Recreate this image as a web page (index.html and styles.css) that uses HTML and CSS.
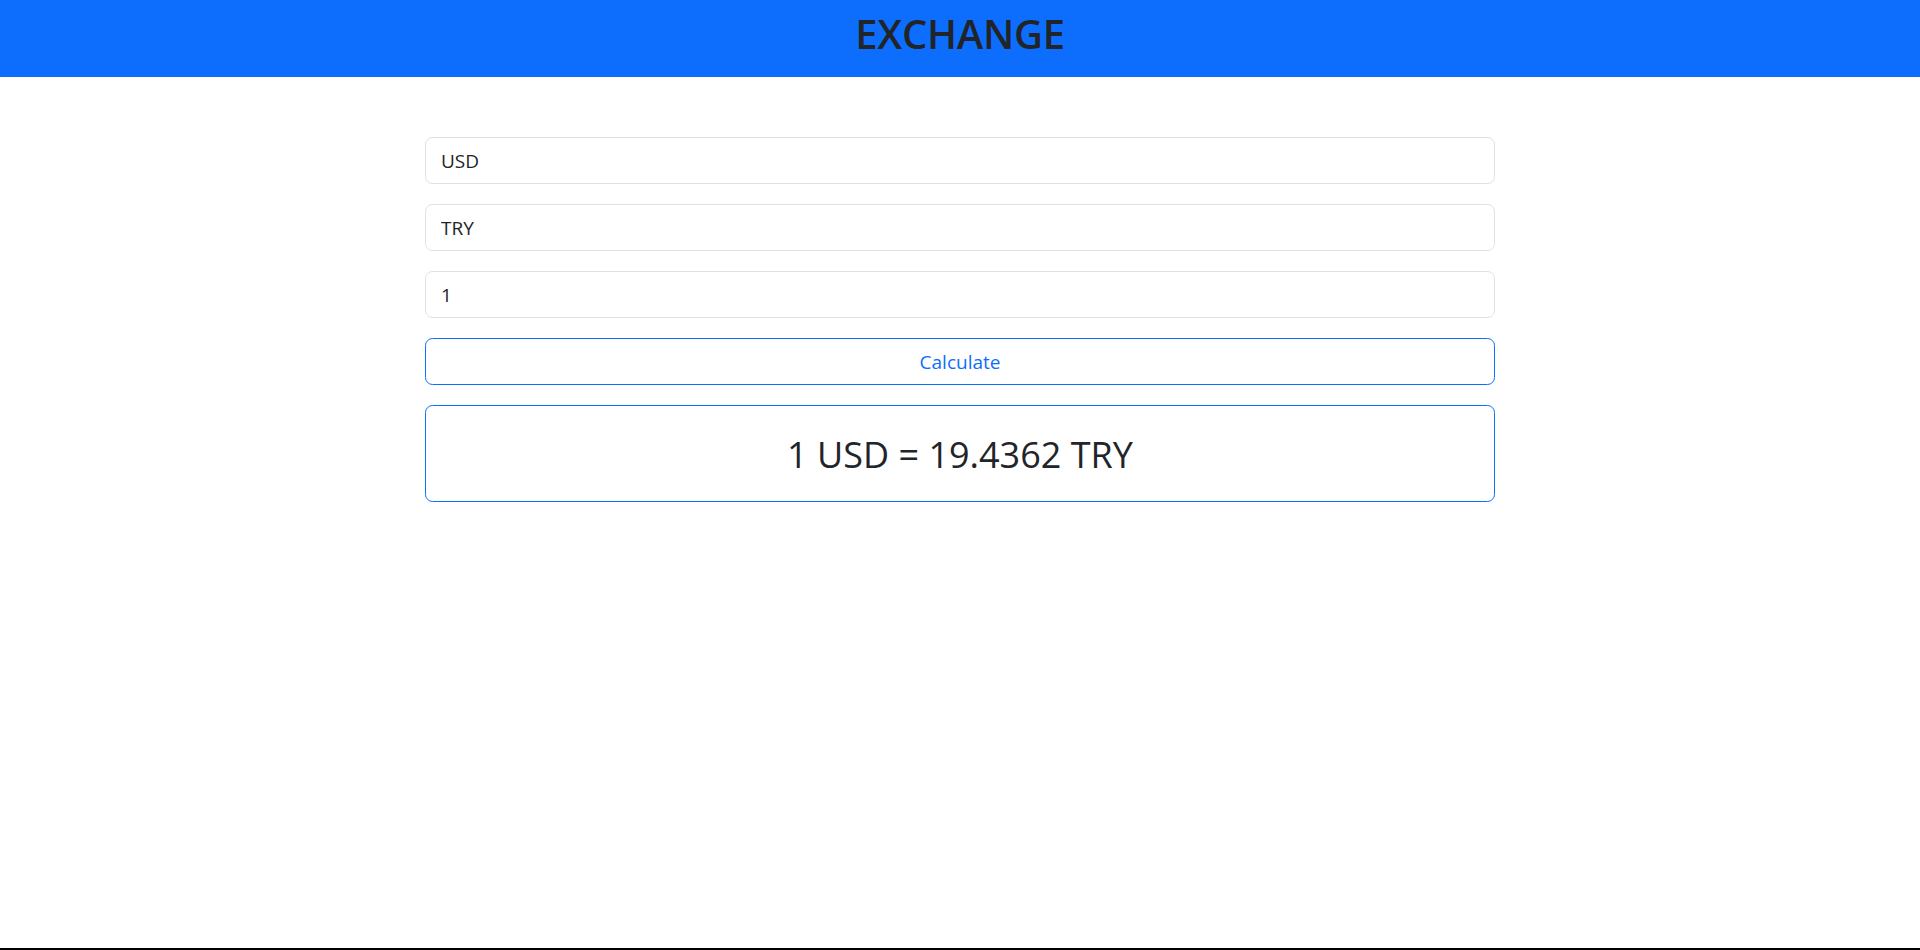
FILE: index.html
```html
<!DOCTYPE html>
<html lang="en">
<head>
<meta charset="utf-8">
<title>Exchange</title>
<link rel="stylesheet" href="styles.css">
</head>
<body>
<div class="page">
  <header class="topbar">
    <h1 class="title">EXCHANGE</h1>
  </header>
  <main class="container">
    <form class="form">
      <input class="field" type="text" value="USD">
      <input class="field" type="text" value="TRY">
      <input class="field" type="text" value="1">
      <button class="btn" type="button">Calculate</button>
      <div class="result">
        <h2 class="result-text">1 USD = 19.4362 TRY</h2>
      </div>
    </form>
  </main>
</div>
</body>
</html>
```
FILE: styles.css
```css
* { box-sizing: border-box; }
html, body { margin: 0; padding: 0; }
body {
  font-family: "Open Sans", "Noto Sans", sans-serif;
  color: #212529;
  background: #fff;
}
.page {
  min-height: 100vh;
  border-bottom: 2px solid #000;
}
.topbar {
  background: #0d6efd;
  height: 77px;
  padding-top: 10px;
  text-align: center;
}
.title {
  margin: 0;
  font-size: 40px;
  line-height: 48px;
  font-weight: 600;
  color: #212529;
  letter-spacing: -0.3px;
}
.container {
  width: 1070px;
  margin: 0 auto;
  padding-top: 60px;
}
.form {
  display: flex;
  flex-direction: column;
  gap: 20px;
}
.field {
  display: block;
  width: 100%;
  height: 47px;
  padding: 0 15px;
  font-family: inherit;
  font-size: 19px;
  color: #212529;
  background: #fff;
  border: 1px solid #dee2e6;
  border-radius: 7.5px;
  outline: none;
}
.btn {
  display: block;
  width: 100%;
  height: 47px;
  font-family: inherit;
  font-size: 19px;
  color: #0d6efd;
  background: #fff;
  border: 1px solid #0d6efd;
  border-radius: 7.5px;
  cursor: pointer;
}
.result {
  height: 97px;
  border: 1px solid #0d6efd;
  border-radius: 7.5px;
  display: flex;
  align-items: center;
  justify-content: center;
}
.result-text {
  margin: 0;
  font-size: 36px;
  font-weight: 400;
  line-height: 48px;
  padding-top: 2px;
  color: #212529;
}
```
